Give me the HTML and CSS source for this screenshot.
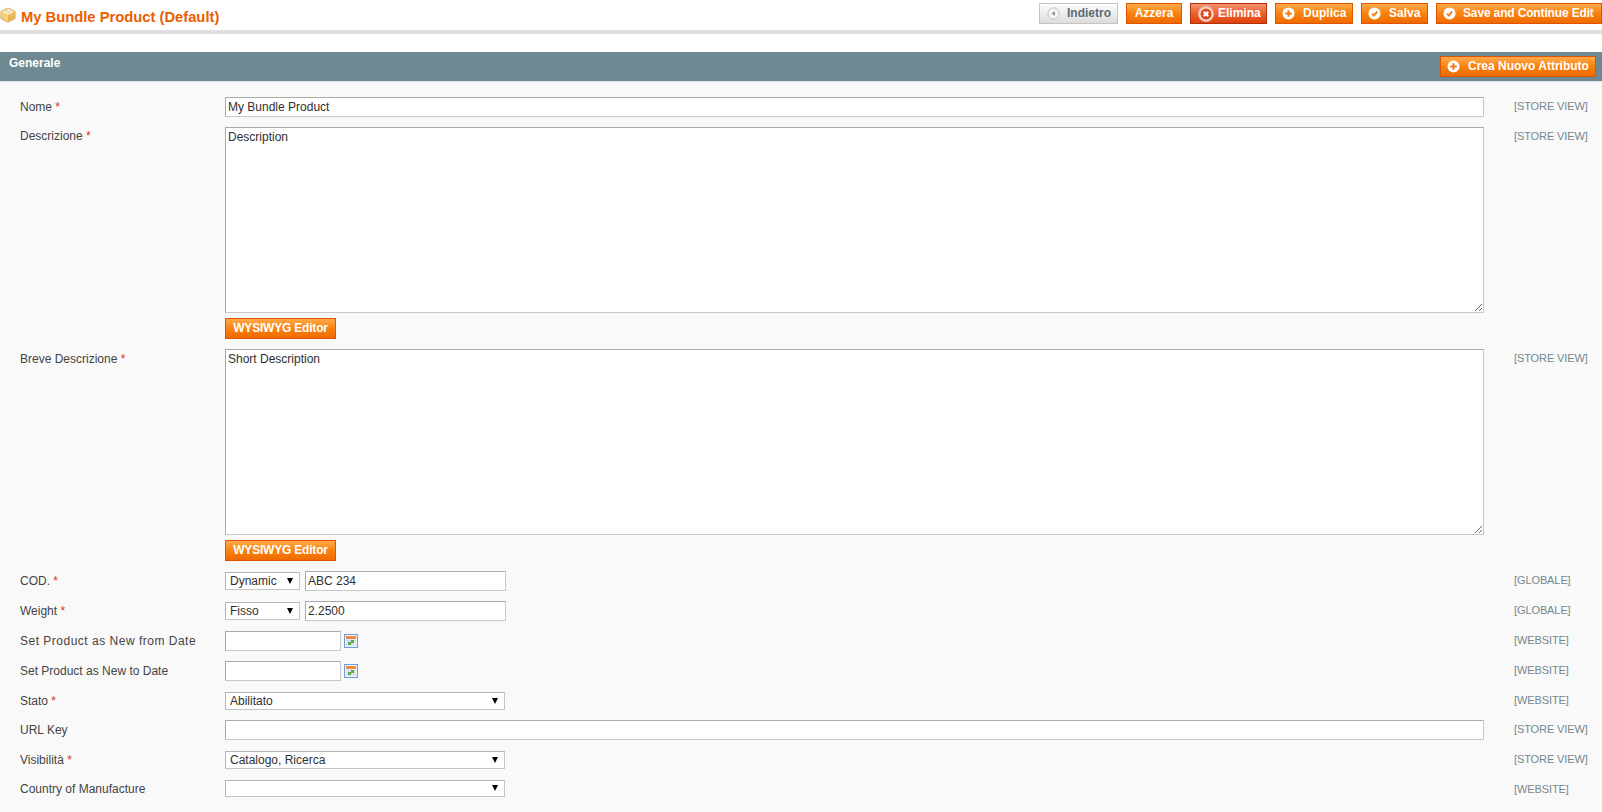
FILE: index.html
```html
<!DOCTYPE html>
<html lang="it">
<head>
<meta charset="utf-8">
<title>My Bundle Product (Default)</title>
<link rel="stylesheet" href="styles.css">
</head>
<body>
<header class="topbar">
  <h3 class="title">
    <svg class="title-icon" viewBox="0 0 16 16" width="16" height="16"><path d="M8 1 15 4.500V11.500L8 15 1 11.500V4.500Z" fill="#f3c766" stroke="#c9a24a" stroke-width="1"/><path d="M1.500 4.700 8 8l6.500-3.300L8 1.500Z" fill="#fdeeb8"/><path d="M8 8v6.600L1.500 11.300V4.700Z" fill="#f6d27a"/><path d="M8 8v6.600l6.500-3.300V4.700Z" fill="#e9b650"/><path d="M4.600 3 11.200 6.200v2.400" fill="none" stroke="#d4d4d4" stroke-width="1.200"/></svg>
    <span>My Bundle Product (Default)</span>
  </h3>
  <div class="actions">
    <button class="btn btn-back"><svg class="ic" viewBox="0 0 14 14"><circle cx="7" cy="7" r="6" fill="#f4f4f4" stroke="#bdbdbd"/><path d="M8.500 4.500v5L5 7z" fill="#8a8a8a"/></svg><span>Indietro</span></button>
    <button class="btn btn-plain">Azzera</button>
    <button class="btn btn-del"><svg class="ic ic-del" viewBox="0 0 14 14"><circle cx="7" cy="7" r="6.500" fill="#f7e0d8" stroke="#f9b9a2"/><circle cx="7" cy="7" r="4.800" fill="#dd4a22"/><path d="M5 5l4 4M9 5l-4 4" stroke="#fff" stroke-width="1.800"/></svg><span>Elimina</span></button>
    <button class="btn btn-icon btn-dup"><svg class="ic" viewBox="0 0 14 14"><circle cx="7" cy="7" r="6.500" fill="#fff"/><path d="M7 3.500v7M3.500 7h7" stroke="#f37b14" stroke-width="2.200"/></svg><span>Duplica</span></button>
    <button class="btn btn-icon btn-save"><svg class="ic" viewBox="0 0 14 14"><circle cx="7" cy="7" r="6.500" fill="#fff"/><path d="M4.300 7.200 6.300 9.200 9.800 4.900" fill="none" stroke="#f37b14" stroke-width="2"/></svg><span>Salva</span></button>
    <button class="btn btn-icon btn-last"><svg class="ic" viewBox="0 0 14 14"><circle cx="7" cy="7" r="6.500" fill="#fff"/><path d="M4.300 7.200 6.300 9.200 9.800 4.900" fill="none" stroke="#f37b14" stroke-width="2"/></svg><span>Save and Continue Edit</span></button>
  </div>
</header>

<section class="panel">
  <div class="panel-head">
    <h4 class="panel-title">Generale</h4>
    <button class="btn btn-icon btn-new"><svg class="ic" viewBox="0 0 14 14"><circle cx="7" cy="7" r="6.500" fill="#fff"/><path d="M7 3.500v7M3.500 7h7" stroke="#f37b14" stroke-width="2.200"/></svg><span>Crea Nuovo Attributo</span></button>
  </div>
  <div class="form">
    <div class="row">
      <label class="lbl">Nome <em>*</em></label>
      <div class="val"><input class="field full" value="My Bundle Product"></div>
      <div class="scope">[STORE VIEW]</div>
    </div>
    <div class="row">
      <label class="lbl lbl-up">Descrizione <em>*</em></label>
      <div class="val stack">
        <textarea class="area">Description</textarea>
        <button class="btn btn-wys"><span>WYSIWYG Editor</span></button>
      </div>
      <div class="scope">[STORE VIEW]</div>
    </div>
    <div class="row">
      <label class="lbl">Breve Descrizione <em>*</em></label>
      <div class="val stack">
        <textarea class="area">Short Description</textarea>
        <button class="btn btn-wys"><span>WYSIWYG Editor</span></button>
      </div>
      <div class="scope">[STORE VIEW]</div>
    </div>
    <div class="row">
      <label class="lbl">COD. <em>*</em></label>
      <div class="val inline">
        <div class="sel sel-s"><select><option>Dynamic</option></select></div>
        <input class="field mid" value="ABC 234">
      </div>
      <div class="scope">[GLOBALE]</div>
    </div>
    <div class="row">
      <label class="lbl">Weight <em>*</em></label>
      <div class="val inline">
        <div class="sel sel-s"><select><option>Fisso</option></select></div>
        <input class="field mid" value="2.2500">
      </div>
      <div class="scope">[GLOBALE]</div>
    </div>
    <div class="row">
      <label class="lbl lbl-wide">Set Product as New from Date</label>
      <div class="val inline-date">
        <input class="field date">
        <svg class="cal" viewBox="0 0 14 14"><rect x=".5" y=".5" width="13" height="13" fill="#eef3fa" stroke="#6f9bd1"/><rect x="2" y="2" width="10" height="3" fill="#f08a3c"/><path d="M2 6.500h10M2 8.500h10M2 10.500h10M4.500 5v7M7 5v7M9.500 5v7" stroke="#c5cfdc" stroke-width=".7"/><rect x="4" y="8" width="3" height="3" fill="#5ba84a"/><rect x="7" y="6" width="3" height="3" fill="#5ba84a"/></svg>
      </div>
      <div class="scope">[WEBSITE]</div>
    </div>
    <div class="row">
      <label class="lbl">Set Product as New to Date</label>
      <div class="val inline-date">
        <input class="field date">
        <svg class="cal" viewBox="0 0 14 14"><rect x=".5" y=".5" width="13" height="13" fill="#eef3fa" stroke="#6f9bd1"/><rect x="2" y="2" width="10" height="3" fill="#f08a3c"/><path d="M2 6.500h10M2 8.500h10M2 10.500h10M4.500 5v7M7 5v7M9.500 5v7" stroke="#c5cfdc" stroke-width=".7"/><rect x="4" y="8" width="3" height="3" fill="#5ba84a"/><rect x="7" y="6" width="3" height="3" fill="#5ba84a"/></svg>
      </div>
      <div class="scope">[WEBSITE]</div>
    </div>
    <div class="row row-sel">
      <label class="lbl">Stato <em>*</em></label>
      <div class="val"><div class="sel sel-l"><select><option>Abilitato</option></select></div></div>
      <div class="scope">[WEBSITE]</div>
    </div>
    <div class="row">
      <label class="lbl">URL Key</label>
      <div class="val"><input class="field full"></div>
      <div class="scope">[STORE VIEW]</div>
    </div>
    <div class="row">
      <label class="lbl">Visibilità <em>*</em></label>
      <div class="val"><div class="sel sel-l"><select><option>Catalogo, Ricerca</option></select></div></div>
      <div class="scope">[STORE VIEW]</div>
    </div>
    <div class="row">
      <label class="lbl lbl-up">Country of Manufacture</label>
      <div class="val"><div class="sel sel-l sel-last"><select><option></option></select></div></div>
      <div class="scope">[WEBSITE]</div>
    </div>
  </div>
</section>
</body>
</html>
```

FILE: styles.css
```css
* { box-sizing: border-box; }
html, body { margin: 0; padding: 0; height: 100%; overflow: hidden; }
body {
  width: 1602px;
  height: 812px;
  background: #fff;
  font: 12px/16px "Liberation Sans", Arial, sans-serif;
  color: #2f2f2f;
  display: flex;
  flex-direction: column;
}
.topbar {
  height: 34px;
  flex: none;
  border-bottom: 4px solid #dfdfdf;
  display: flex;
  justify-content: space-between;
  align-items: flex-start;
  padding-top: 3px;
}
.title {
  margin: 0;
  display: flex;
  align-items: center;
  gap: 5px;
  height: 24px;
  font-size: 14.75px;
  font-weight: bold;
  color: #eb5e00;
  padding-top: 3px;
}
.title-icon { display: block; width: 16px; height: 16px; margin-top: -4px; }
.actions { display: flex; gap: 8px; }
.btn {
  display: inline-flex;
  align-items: center;
  height: 21px;
  margin: 0;
  padding: 0 0 2px;
  border: 1px solid #de5400;
  background: linear-gradient(#ffa94a, #f9820f 50%, #ef6a00);
  color: #fff;
  font: bold 12px/16px "Liberation Sans", Arial, sans-serif;
  white-space: nowrap;
}
.btn span { display: block; }
.ic { display: block; width: 13px; height: 13px; flex: none; margin-top: 2px; }
.btn-icon { padding-left: 6px; gap: 8px; }
.btn-back {
  width: 79px;
  padding-left: 7px;
  gap: 7px;
  color: #5b6b75;
  border-color: #c4c4c4;
  background: linear-gradient(#fdfdfd, #dcdcdc);
}
.btn-plain { width: 56px; justify-content: center; }
.btn-del {
  width: 77px;
  padding-left: 7px;
  gap: 4px;
  border-color: #b3310a;
  background: linear-gradient(#f8936d, #ec5f33 50%, #df4208);
}
.ic-del { width: 16px; height: 16px; margin-top: 2px; }
.btn-dup { width: 78px; }
.btn-save { width: 67px; }
.btn-last { width: 166px; gap: 7px; letter-spacing: -.15px; }
.btn-new { width: 156px; }
.panel { flex: 1; margin-top: 18px; background: #f9f9f9; }
.panel-head {
  height: 30px;
  background: #6f8992;
  border-bottom: 1px solid #dfe5e7;
  display: flex;
  justify-content: space-between;
  align-items: flex-start;
  padding: 3px 6px 0 9px;
}
.panel-head .btn { margin-top: 1px; }
.panel-title {
  margin: 0;
  color: #fff;
  font-size: 12px;
  font-weight: bold;
  line-height: 16px;
}
.form {
  display: flex;
  flex-direction: column;
  gap: 10px;
  padding: 15px 0 0 20px;
}
.row {
  display: grid;
  grid-template-columns: 205px 1259px auto;
  min-height: 20px;
}
.row-sel { height: 19px; min-height: 19px; }
.lbl { display: block; padding-top: 2px; color: #444; white-space: nowrap; }
.lbl-up { padding-top: 1px; }
.lbl-wide { letter-spacing: .5px; }
.lbl em { color: #e02b27; font-style: normal; }
.scope { margin-left: 30px; padding-top: 1px; font-size: 11px; letter-spacing: -.1px; color: #74878f; white-space: nowrap; }
.val { min-width: 0; }
.stack { display: flex; flex-direction: column; align-items: flex-start; gap: 5px; }
.inline { display: flex; align-items: center; gap: 5px; }
.inline-date { display: flex; align-items: center; gap: 3px; }
.field {
  display: block;
  height: 20px;
  margin: 0;
  padding: 1px 2px;
  border: 1px solid;
  border-color: #aaa #c8c8c8 #c8c8c8 #aaa;
  background: #fff;
  color: #2f2f2f;
  font: 12px/16px "Liberation Sans", Arial, sans-serif;
}
.full { width: 1259px; }
.mid { width: 201px; }
.date { width: 116px; }
.cal { display: block; width: 14px; height: 14px; }
.area {
  display: block;
  width: 1259px;
  height: 186px;
  margin: 0;
  padding: 1px 2px;
  border: 1px solid;
  border-color: #aaa #c8c8c8 #c8c8c8 #aaa;
  background: #fff;
  color: #2f2f2f;
  font: 12px/16px "Liberation Sans", Arial, sans-serif;
}
.btn-wys { width: 111px; justify-content: center; letter-spacing: -.2px; }
.sel { position: relative; height: 18px; margin-top: 1px; background: #fff; }
.sel::after {
  content: "";
  position: absolute;
  top: 6px;
  right: 7px;
  border-style: solid;
  border-width: 6px 3px 0;
  border-color: #000 transparent transparent;
}
.sel select {
  display: block;
  width: 100%;
  height: 100%;
  margin: 0;
  padding: 0 0 0 4px;
  border: 1px solid;
  border-color: #b4b4b4 #c4c4c4 #c4c4c4 #b4b4b4;
  border-radius: 0;
  background: #fff;
  appearance: none;
  color: #2f2f2f;
  font: 12px/16px "Liberation Sans", Arial, sans-serif;
}
.inline .sel { margin-top: 0; }
.sel-s { width: 75px; }
.sel-l { width: 280px; }
.sel-last { height: 17px; margin-top: 0; }
.sel-last::after { top: 5px; }
```
